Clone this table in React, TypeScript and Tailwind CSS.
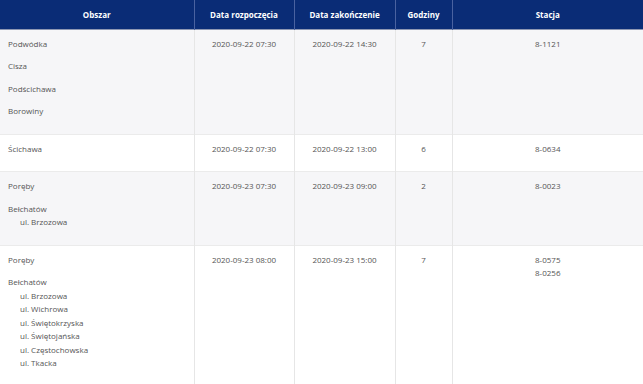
const rows = [
  {
    area: [["Podwódka"], ["Cisza"], ["Podścichawa"], ["Borowiny"]],
    start: "2020-09-22 07:30",
    end: "2020-09-22 14:30",
    hours: "7",
    stations: ["8-1121"],
  },
  {
    area: [["Ścichawa"]],
    start: "2020-09-22 07:30",
    end: "2020-09-22 13:00",
    hours: "6",
    stations: ["8-0634"],
  },
  {
    area: [["Poręby"], ["Bełchatów", "ul. Brzozowa"]],
    start: "2020-09-23 07:30",
    end: "2020-09-23 09:00",
    hours: "2",
    stations: ["8-0023"],
  },
  {
    area: [
      ["Poręby"],
      [
        "Bełchatów",
        "ul. Brzozowa",
        "ul. Wichrowa",
        "ul. Świętokrzyska",
        "ul. Świętojańska",
        "ul. Częstochowska",
        "ul. Tkacka",
      ],
    ],
    start: "2020-09-23 08:00",
    end: "2020-09-23 15:00",
    hours: "7",
    stations: ["8-0575", "8-0256"],
  },
];

const headers = ["Obszar", "Data rozpoczęcia", "Data zakończenie", "Godziny", "Stacja"];

export default function App() {
  return (
    <div className="w-[643px] h-[384px] overflow-hidden bg-white font-['Open_Sans',sans-serif] text-[8px] leading-[13.5px] text-[#555555]">
      <table className="w-full table-fixed border-collapse">
        <colgroup>
          <col className="w-[194px]" />
          <col className="w-[100px]" />
          <col className="w-[101px]" />
          <col className="w-[57px]" />
          <col />
        </colgroup>
        <thead>
          <tr className="h-[29px] bg-[#0a2c76] border-b border-[#8d97b3]">
            {headers.map((h, i) => (
              <th
                key={h}
                className={`text-center font-bold text-white align-middle ${
                  i > 0 ? "border-l border-[#4a62a0]" : ""
                }`}
              >
                {h}
              </th>
            ))}
          </tr>
        </thead>
        <tbody>
          {rows.map((r, idx) => (
            <tr
              key={idx}
              className={`border-t border-[#ebebeb] align-top ${
                idx % 2 === 0 ? "bg-[#f6f6f8]" : "bg-white"
              }`}
            >
              <td className="pl-2 pt-[7px] pb-[7px]">
                {r.area.map((group, gi) => (
                  <div key={gi} className="mb-[9px]">
                    {group.map((line, li) => (
                      <div key={li} className={li > 0 ? "pl-3" : ""}>
                        {line}
                      </div>
                    ))}
                  </div>
                ))}
              </td>
              <td className="pt-[7px] text-center border-l border-[#e6e6e6]">{r.start}</td>
              <td className="pt-[7px] text-center border-l border-[#e6e6e6]">{r.end}</td>
              <td className="pt-[7px] text-center border-l border-[#e6e6e6]">{r.hours}</td>
              <td className="pt-[7px] text-center border-l border-[#e6e6e6]">
                {r.stations.map((s) => (
                  <div key={s}>{s}</div>
                ))}
              </td>
            </tr>
          ))}
        </tbody>
      </table>
    </div>
  );
}
